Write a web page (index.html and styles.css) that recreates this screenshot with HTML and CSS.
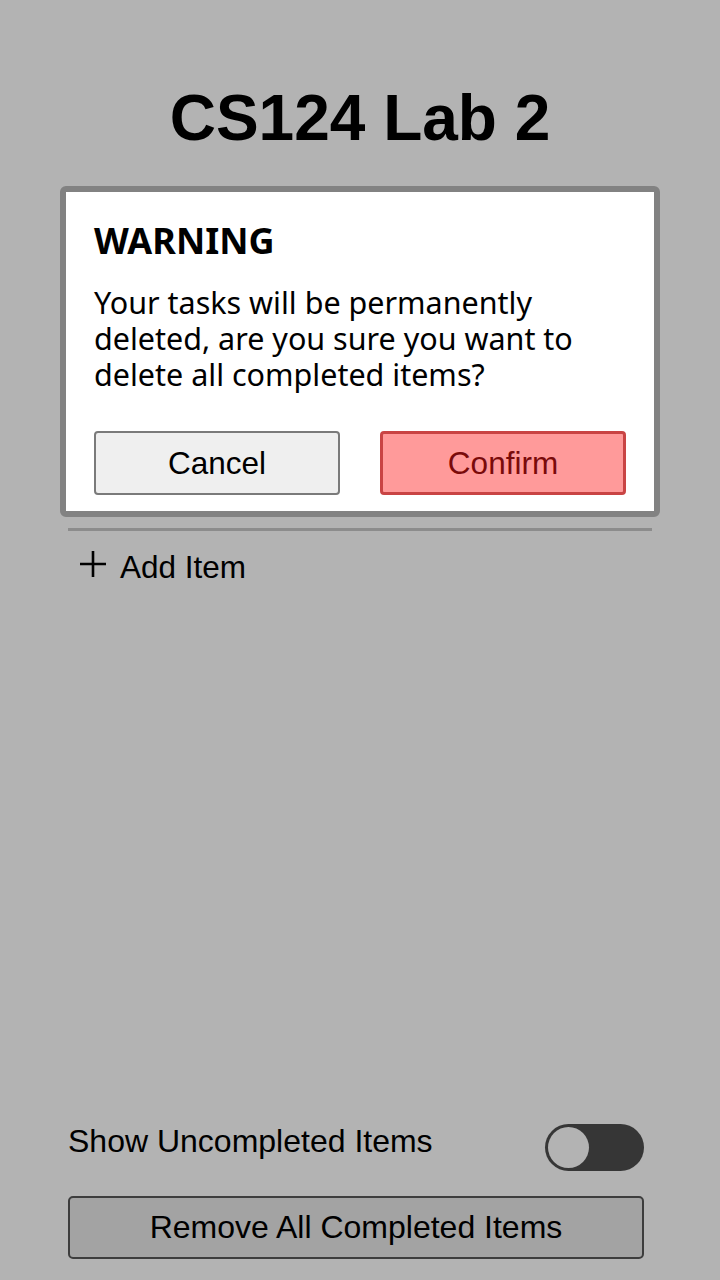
FILE: index.html
```html
<!DOCTYPE html>
<html>
<head>
<meta charset="utf-8">
<link rel="stylesheet" href="styles.css">
</head>
<body>
<div class="screen">
  <h1 class="title">CS124 Lab 2</h1>
  <div class="list">
    <div class="divider"></div>
    <div class="add-item">
      <svg class="plus" width="26" height="26" viewBox="0 0 26 26"><path d="M13 0V26M0 13H26" stroke="#000" stroke-width="2.6" fill="none"/></svg>
      <span>Add Item</span>
    </div>
  </div>
  <div class="footer">
    <div class="toggle-row">
      <span class="toggle-label">Show Uncompleted Items</span>
      <div class="switch"><div class="knob"></div></div>
    </div>
    <button class="remove-btn">Remove All Completed Items</button>
  </div>
  <div class="modal">
    <div class="modal-title">WARNING</div>
    <p class="modal-text">Your tasks will be permanently deleted, are you sure you want to delete all completed items?</p>
    <div class="modal-actions">
      <button class="btn btn-cancel">Cancel</button>
      <button class="btn btn-confirm">Confirm</button>
    </div>
  </div>
</div>
</body>
</html>
```
FILE: styles.css
```css
* { box-sizing: border-box; }
html, body { margin: 0; padding: 0; }
body {
  background: #b3b3b3;
  font-family: "Liberation Sans", Arial, sans-serif;
  color: #000;
}
.screen {
  position: relative;
  width: 720px;
  height: 1280px;
  display: flex;
  flex-direction: column;
  background: #b3b3b3;
}
.title {
  margin: 81px 0 0;
  font: bold 64px/74px "Liberation Sans", Arial, sans-serif;
  text-align: center;
}
.list {
  margin-top: 373px;
  padding: 0 68px;
}
.divider {
  height: 3px;
  background: #8c8c8c;
}
.add-item {
  height: 70px;
  display: flex;
  align-items: center;
  gap: 14px;
  padding-left: 12px;
  font-size: 31.5px;
  line-height: 36px;
}
.add-item span { margin-top: 2px; }
.plus { display: block; margin-top: -4px; }
.footer {
  margin-top: auto;
  padding: 0 76px 21px 68px;
  display: flex;
  flex-direction: column;
  gap: 25px;
}
.toggle-row {
  display: flex;
  justify-content: space-between;
  align-items: flex-start;
}
.toggle-label {
  font-size: 32px;
  line-height: 36px;
  margin-top: -1px;
}
.switch {
  width: 99px;
  height: 47px;
  border-radius: 24px;
  background: #363636;
  padding: 3px;
}
.knob {
  width: 41px;
  height: 41px;
  border-radius: 50%;
  background: #b3b3b3;
}
.remove-btn {
  height: 63px;
  border: 2px solid #3d3d3d;
  border-radius: 5px;
  background: #a3a3a3;
  font: 32px "Liberation Sans", Arial, sans-serif;
  color: #000;
  padding: 0;
}
.modal {
  position: absolute;
  left: 60px;
  top: 186px;
  width: 600px;
  height: 331px;
  border: 6px solid #828282;
  border-radius: 6px;
  background: #fff;
  padding: 27px 28px 16px;
  display: flex;
  flex-direction: column;
  font-family: "Noto Sans", sans-serif;
}
.modal-title {
  font-weight: bold;
  font-size: 36px;
  line-height: 44px;
}
.modal-text {
  margin: 21px 0 0;
  font-size: 30.5px;
  line-height: 36px;
}
.modal-actions {
  margin-top: auto;
  display: grid;
  grid-template-columns: 1fr 1fr;
  gap: 40px;
}
.btn {
  height: 64px;
  border-radius: 4px;
  font: 31.5px "Liberation Sans", Arial, sans-serif;
  padding: 0;
}
.btn-cancel {
  background: #efefef;
  border: 2px solid #7a7a7a;
  color: #000;
}
.btn-confirm {
  background: #ff9a9a;
  border: 3px solid #c94444;
  color: #7a0a0a;
}
```
